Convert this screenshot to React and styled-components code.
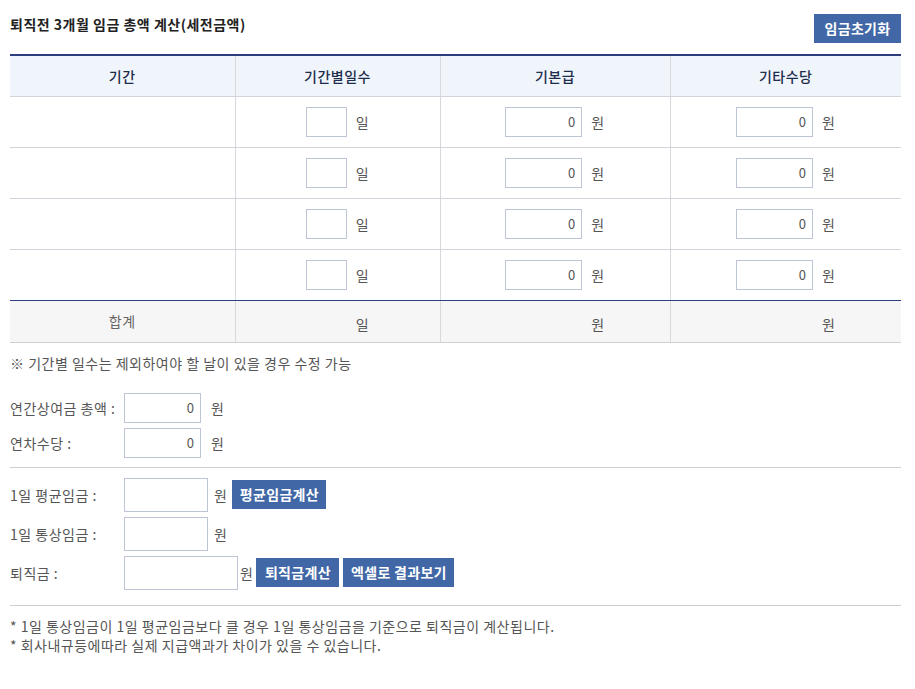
import React from "react";
import styled, { createGlobalStyle } from "styled-components";

const Global = createGlobalStyle`
  html, body { margin: 0; padding: 0; background: #fff; }
  body {
    font-family: "Noto Sans CJK KR", "Noto Sans", "Liberation Sans", sans-serif;
    font-size: 14px;
    letter-spacing: 0.5px;
    color: #555;
  }
  * { box-sizing: border-box; }
`;

const Page = styled.div`
  width: 915px;
  padding: 14px 14px 0 10px;
`;

const TitleBar = styled.div`
  display: flex;
  justify-content: space-between;
  align-items: center;
  height: 29px;
`;

const Title = styled.h2`
  margin: 0;
  margin-top: -10px;
  font-size: 14px;
  font-weight: 700;
  color: #222;
  line-height: 20px;
`;

const Button = styled.button`
  width: ${(p) => p.$w}px;
  height: 29px;
  padding: 0;
  border: 0;
  margin-left: ${(p) => p.$ml || 0}px;
  background: #4167a6;
  color: #fff;
  font-family: inherit;
  font-size: 14px;
  letter-spacing: 0.3px;
  font-weight: 700;
  line-height: 29px;
  text-align: center;
  white-space: nowrap;
  cursor: pointer;
`;

const Table = styled.table`
  width: 891px;
  margin-top: 11px;
  border-collapse: collapse;
  table-layout: fixed;
  border-top: 2px solid #2c3e7c;
`;

const Th = styled.th`
  height: 41px;
  background: #f0f4fb;
  color: #1f2d4d;
  font-size: 14px;
  font-weight: 500;
  text-align: center;
  border-bottom: 1px solid #d2d4dc;
  border-left: 1px solid #d7d9de;
  &:first-child { border-left: 0; }
`;

const Td = styled.td`
  height: 51px;
  padding: 0;
  text-align: center;
  border-bottom: 1px solid ${(p) => (p.$last ? "#2c3e7c" : "#d2d4dc")};
  border-left: 1px solid #d7d9de;
  &:first-child { border-left: 0; }
`;

const TotalTd = styled.td`
  height: 42px;
  padding: 0;
  text-align: center;
  background: #f6f6f6;
  color: #666;
  border-bottom: 1px solid #cfcfcf;
  border-left: 1px solid #d7d9de;
  &:first-child { border-left: 0; }
`;

const CellInner = styled.div`
  display: inline-flex;
  align-items: center;
  gap: 9px;
`;

const Input = styled.input`
  width: ${(p) => p.$w}px;
  height: ${(p) => p.$h || 30}px;
  border: 1px solid #bcc4d6;
  padding: 0 6px;
  font-family: inherit;
  font-size: 13px;
  letter-spacing: 0;
  color: #555;
  text-align: right;
  background: #fff;
  outline: none;
`;

const Ghost = styled.span`
  display: inline-block;
  width: ${(p) => p.$w}px;
`;

const Unit = styled.span`
  color: #555;
  margin-left: ${(p) => p.$ml || 0}px;
`;

const Note = styled.p`
  margin: 11px 0 0;
  line-height: 19px;
  color: #555;
`;

const Form = styled.div`
  display: flex;
  flex-direction: column;
  gap: ${(p) => p.$gap}px;
  padding: ${(p) => p.$pad};
`;

const FormRow = styled.div`
  display: flex;
  align-items: center;
`;

const Label = styled.span`
  width: 114px;
  color: #555;
  white-space: nowrap;
`;

const Divider = styled.hr`
  width: 891px;
  margin: 0;
  border: 0;
  border-top: 1px solid #cfcfcf;
`;

const Footnotes = styled.div`
  padding-top: 11px;
  line-height: 19px;
  color: #555;
`;

const cols = [225, 205, 230, 231];

export default function App() {
  const rows = [0, 1, 2, 3];
  return (
    <Page>
      <Global />
      <TitleBar>
        <Title>퇴직전 3개월 임금 총액 계산(세전금액)</Title>
        <Button $w={87}>임금초기화</Button>
      </TitleBar>
      <Table>
        <colgroup>
          {cols.map((w, i) => (
            <col key={i} style={{ width: w }} />
          ))}
        </colgroup>
        <thead>
          <tr>
            <Th>기간</Th>
            <Th>기간별일수</Th>
            <Th>기본급</Th>
            <Th>기타수당</Th>
          </tr>
        </thead>
        <tbody>
          {rows.map((r) => (
            <tr key={r}>
              <Td $last={r === 3}></Td>
              <Td $last={r === 3}>
                <CellInner>
                  <Input $w={41} defaultValue="" />
                  <Unit>일</Unit>
                </CellInner>
              </Td>
              <Td $last={r === 3}>
                <CellInner>
                  <Input $w={77} defaultValue="0" />
                  <Unit>원</Unit>
                </CellInner>
              </Td>
              <Td $last={r === 3}>
                <CellInner>
                  <Input $w={77} defaultValue="0" />
                  <Unit>원</Unit>
                </CellInner>
              </Td>
            </tr>
          ))}
          <tr>
            <TotalTd>합계</TotalTd>
            <TotalTd>
              <CellInner>
                <Ghost $w={41} />
                <Unit>일</Unit>
              </CellInner>
            </TotalTd>
            <TotalTd>
              <CellInner>
                <Ghost $w={77} />
                <Unit>원</Unit>
              </CellInner>
            </TotalTd>
            <TotalTd>
              <CellInner>
                <Ghost $w={77} />
                <Unit>원</Unit>
              </CellInner>
            </TotalTd>
          </tr>
        </tbody>
      </Table>
      <Note>※ 기간별 일수는 제외하여야 할 날이 있을 경우 수정 가능</Note>
      <Form $gap={5} $pad="20px 0 9px">
        <FormRow>
          <Label>연간상여금 총액 :</Label>
          <Input $w={77} defaultValue="0" />
          <Unit $ml={10}>원</Unit>
        </FormRow>
        <FormRow>
          <Label>연차수당 :</Label>
          <Input $w={77} defaultValue="0" />
          <Unit $ml={10}>원</Unit>
        </FormRow>
      </Form>
      <Divider />
      <Form $gap={5} $pad="10px 0 15px">
        <FormRow>
          <Label>1일 평균임금 :</Label>
          <Input $w={84} $h={34} />
          <Unit $ml={6}>원</Unit>
          <Button $w={94} $ml={5}>평균임금계산</Button>
        </FormRow>
        <FormRow>
          <Label>1일 통상임금 :</Label>
          <Input $w={84} $h={34} />
          <Unit $ml={6}>원</Unit>
        </FormRow>
        <FormRow>
          <Label>퇴직금 :</Label>
          <Input $w={114} $h={34} />
          <Unit $ml={2}>원</Unit>
          <Button $w={83} $ml={3}>퇴직금계산</Button>
          <Button $w={111} $ml={4}>엑셀로 결과보기</Button>
        </FormRow>
      </Form>
      <Divider />
      <Footnotes>
        <div>* 1일 통상임금이 1일 평균임금보다 클 경우 1일 통상임금을 기준으로 퇴직금이 계산됩니다.</div>
        <div>* 회사내규등에따라 실제 지급액과가 차이가 있을 수 있습니다.</div>
      </Footnotes>
    </Page>
  );
}
